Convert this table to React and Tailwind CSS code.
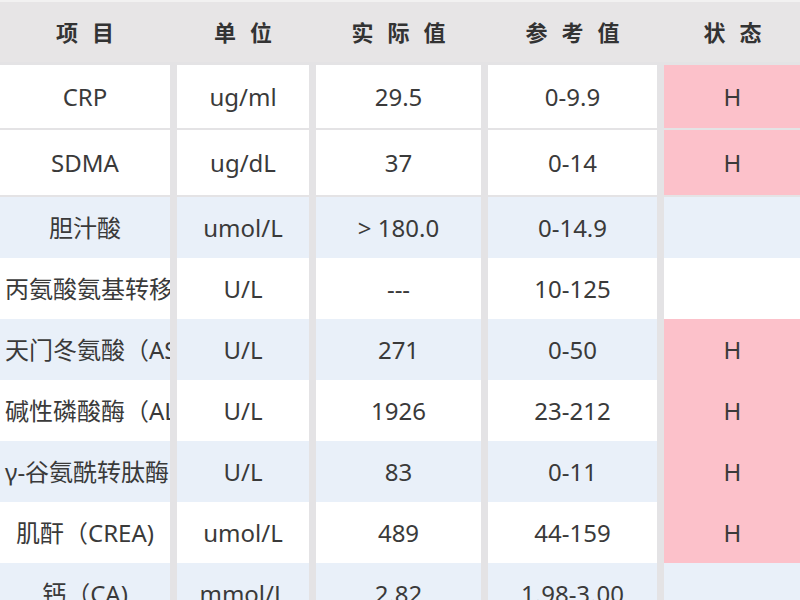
import React from 'react';

// lab result table: gray gutters, striped rows, pink status cells
const rows = [
  { name: 'CRP', unit: 'ug/ml', value: '29.5', ref: '0-9.9', flag: 'H', bg: 'bg-white', h: 'h-[63px] mt-[3px]' },
  { name: 'SDMA', unit: 'ug/dL', value: '37', ref: '0-14', flag: 'H', bg: 'bg-white', h: 'h-[65px] mt-[2px]' },
  { name: '胆汁酸', unit: 'umol/L', value: '> 180.0', ref: '0-14.9', flag: '', bg: 'bg-[#e9f0f9]', h: 'h-[61px] mt-[2px]' },
  { name: '丙氨酸氨基转移酶（ALT）', unit: 'U/L', value: '---', ref: '10-125', flag: '', bg: 'bg-white', h: 'h-[61px]' },
  { name: '天门冬氨酸（AST）', unit: 'U/L', value: '271', ref: '0-50', flag: 'H', bg: 'bg-[#e9f0f9]', h: 'h-[61px]' },
  { name: '碱性磷酸酶（ALP）', unit: 'U/L', value: '1926', ref: '23-212', flag: 'H', bg: 'bg-white', h: 'h-[61px]' },
  { name: 'γ-谷氨酰转肽酶（GGT）', unit: 'U/L', value: '83', ref: '0-11', flag: 'H', bg: 'bg-[#e9f0f9]', h: 'h-[61px]' },
  { name: '肌酐（CREA)', unit: 'umol/L', value: '489', ref: '44-159', flag: 'H', bg: 'bg-white', h: 'h-[61px]' },
  { name: '钙（CA)', unit: 'mmol/L', value: '2.82', ref: '1.98-3.00', flag: '', bg: 'bg-[#e9f0f9]', h: 'h-[61px]' },
];

const cols = 'grid grid-cols-[170px_132px_165px_169px_137px] gap-x-[7px]';

function Head({ chars }) {
  return (
    <div className="flex items-center justify-center gap-[14px] text-[22px] font-semibold text-[#333]">
      {chars.map((c) => (
        <span key={c}>{c}</span>
      ))}
    </div>
  );
}

function Cell({ bg, children, clip }) {
  return (
    <div className={`${bg} overflow-hidden whitespace-nowrap text-center flex items-center ${clip ? 'px-[5px]' : ''}`}>
      <div className="w-full text-center">{children}</div>
    </div>
  );
}

export default function App() {
  return (
    <div
      className="w-[800px] h-[600px] overflow-hidden bg-[#e4e3e5] text-[#3a3a3a] text-[24px] leading-none"
      style={{ fontFamily: '"Noto Sans", "Noto Sans CJK SC", sans-serif' }}
    >
      <div className={`${cols} h-[62px] bg-[#e7e5e6] border-t-[2px] border-[#f2f1f1]`}>
        <Head chars={['项', '目']} />
        <Head chars={['单', '位']} />
        <Head chars={['实', '际', '值']} />
        <Head chars={['参', '考', '值']} />
        <Head chars={['状', '态']} />
      </div>
      {rows.map((r) => (
        <div key={r.name} className={`${cols} ${r.h}`}>
          <div className={`${r.bg} overflow-hidden whitespace-nowrap px-[5px] flex items-center`}>
            <div className="w-full text-center">{r.name}</div>
          </div>
          <Cell bg={r.bg}>{r.unit}</Cell>
          <Cell bg={r.bg}>{r.value}</Cell>
          <Cell bg={r.bg}>{r.ref}</Cell>
          <Cell bg={r.flag ? 'bg-[#fcc1ca]' : r.bg}>{r.flag}</Cell>
        </div>
      ))}
    </div>
  );
}
